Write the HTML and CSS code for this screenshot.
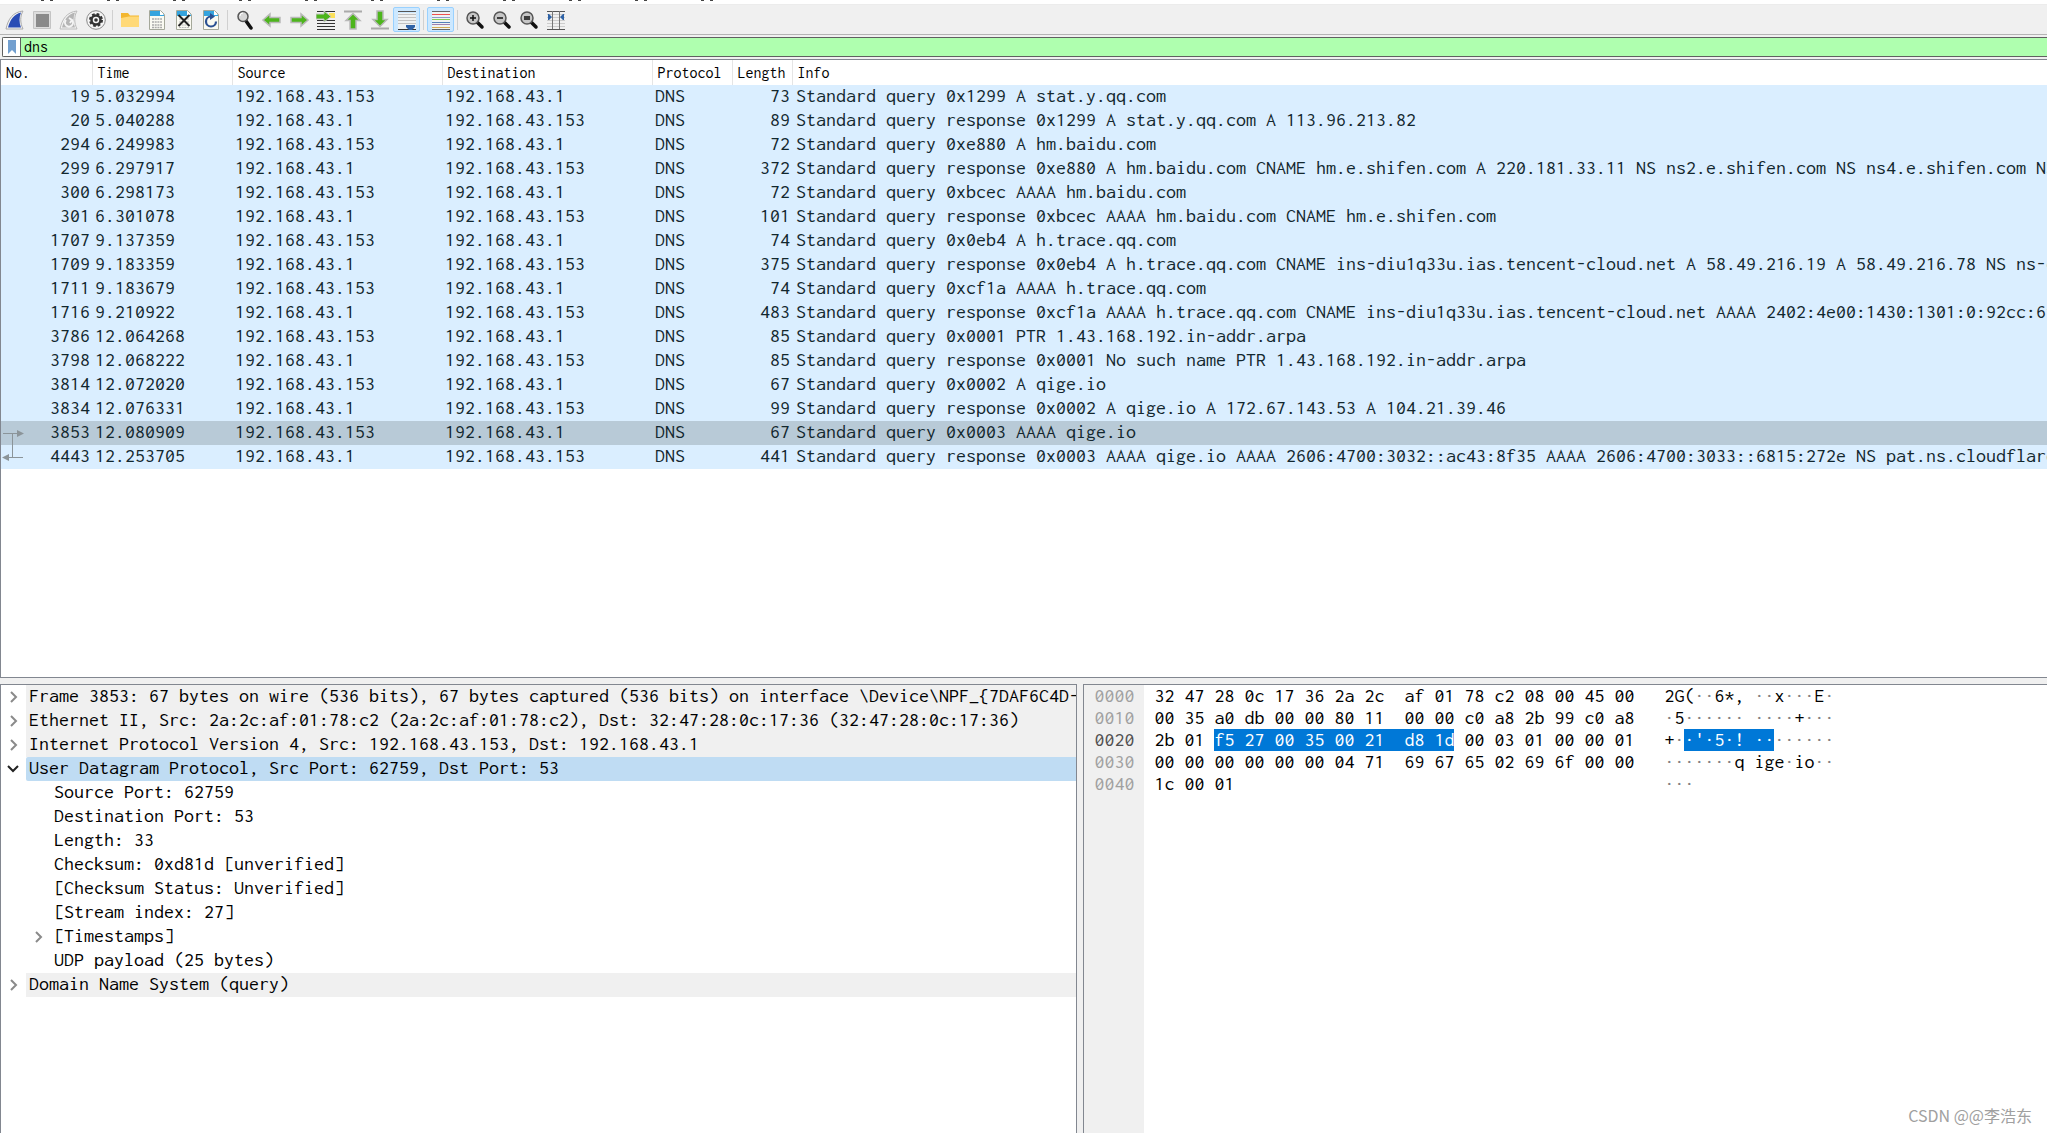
FILE: index.html
```html
<!DOCTYPE html>
<html lang="en">
<head>
<meta charset="utf-8">
<title>Packet capture</title>
<link rel="stylesheet" href="styles.css">
</head>
<body>
<div class="menubar" aria-hidden="true">
  <i></i><i></i><i></i><i></i><i></i><i></i><i></i><i></i><i></i><i></i><i></i>
</div>

<div class="toolbar" role="toolbar" aria-label="Main toolbar">
  <button aria-label="Start capture"><svg viewBox="0 0 20 20"><path d="M1 19C3 9 8 2 18 1c-3 5-3 12 0 18z" fill="#f4f4f4" stroke="#aaa"/><path d="M3 17.500C5 10 9 4 16 2.500c-2 5-2 10 0 15z" fill="#2a4cb5"/></svg></button>
  <button aria-label="Stop capture"><svg viewBox="0 0 20 20"><path d="M1.500 1.500h17v17h-17z" fill="#ddd" stroke="#c4c4c4"/><path d="M4 4h13v13H4z" fill="#8a8a8a"/></svg></button>
  <button aria-label="Restart capture"><svg viewBox="0 0 20 20"><path d="M1 19C3 9 8 2 18 1c-3 5-3 12 0 18z" fill="#f4f4f4" stroke="#bbb"/><path d="M3 17.500C5 10 9 4 16 2.500c-2 5-2 10 0 15z" fill="#b5b5b5"/><path d="M7 10a4 4 0 1 0 6 0M10 8l3 2-2 3" fill="none" stroke="#f4f4f4" stroke-width="2"/></svg></button>
  <button aria-label="Capture options"><svg viewBox="0 0 20 20"><circle cx="10" cy="10" r="9.300" fill="#f5f5f5" stroke="#888"/><circle cx="10" cy="10" r="6" fill="none" stroke="#333" stroke-width="2" stroke-dasharray="2.700 2"/><circle cx="10" cy="10" r="4.500" fill="none" stroke="#333" stroke-width="2.500"/><circle cx="10" cy="10" r="1.800" fill="#333"/></svg></button>
  <span class="sep"></span>
  <button aria-label="Open file"><svg viewBox="0 0 20 20"><path d="M1 3h7l2 2.500h9V17H1z" fill="#f3b62f"/><path d="M1 8l8-1.500h10V17H1z" fill="#ffd978"/></svg></button>
  <button aria-label="Save file"><svg viewBox="0 0 20 20"><path d="M2.500.5h11l4 4v15h-15z" fill="#fafaf2" stroke="#a5a89a"/><path d="M3 1h10v3h4v2H3z" fill="#35a4de"/><path d="M13 1v4h4z" fill="#fff"/><path d="M5 9h10M5 12h10M5 15h10M5 17.500h10" stroke="#aaa" stroke-width="1.500" stroke-dasharray="2 .700"/></svg></button>
  <button aria-label="Close file"><svg viewBox="0 0 20 20"><path d="M2.500.5h11l4 4v15h-15z" fill="#fafaf2" stroke="#a5a89a"/><path d="M3 1h10v3h4v2H3z" fill="#35a4de"/><path d="M13 1v4h4z" fill="#fff"/><path d="M5 9h10M5 12h10M5 15h10M5 17.500h10" stroke="#bbb" stroke-dasharray="2 .700"/><path d="M4.500 5l11 11M15.500 5l-11 11" stroke="#222" stroke-width="2"/></svg></button>
  <button aria-label="Reload file"><svg viewBox="0 0 20 20"><path d="M2.500.5h11l4 4v15h-15z" fill="#fafaf2" stroke="#a5a89a"/><path d="M3 1h10v3h4v2H3z" fill="#35a4de"/><path d="M13 1v4h4z" fill="#fff"/><path d="M15 11.500A5 5 0 1 1 10 6.500" fill="none" stroke="#2a5092" stroke-width="2.200"/><path d="M9 3l5 3.500-5 3.500z" fill="#2a5092"/></svg></button>
  <span class="sep"></span>
  <button aria-label="Find packet"><svg viewBox="0 0 20 20"><path d="M11 11l5 7" stroke="#111" stroke-width="3.500" stroke-linecap="round"/><circle cx="8" cy="6.500" r="5" fill="#d6d6d6" stroke="#555" stroke-width="1.500"/><path d="M5 6a3 3 0 0 1 3-3" stroke="#fff" fill="none"/></svg></button>
  <button aria-label="Previous packet"><svg viewBox="0 0 20 20"><path d="M1 10l7-6v3.500h10v5H8V16z" fill="#4db51c" stroke="#b9b9b9" stroke-width="1.500"/></svg></button>
  <button aria-label="Next packet"><svg viewBox="0 0 20 20"><path d="M19 10l-7-6v3.500H2v5h10V16z" fill="#4db51c" stroke="#b9b9b9" stroke-width="1.500"/></svg></button>
  <button aria-label="Go to packet"><svg viewBox="0 0 20 20"><path d="M1 1.500h18M1 10.500h18M1 13.500h18M1 16.500h18M1 19.500h18" stroke="#333"/><path d="M13 3h6v5h-6z" fill="#fbe05a"/><path d="M15 6.500L8 1v3H0v5h8v3z" fill="#4db51c" stroke="#c4c4c4"/></svg></button>
  <button aria-label="First packet"><svg viewBox="0 0 20 20"><path d="M1 1.500h18" stroke="#aaa" stroke-width="2"/><path d="M10 3.500l7 7h-4V19H7v-8.500H3z" fill="#4db51c" stroke="#b9b9b9" stroke-width="1.500"/></svg></button>
  <button aria-label="Last packet"><svg viewBox="0 0 20 20"><path d="M1 18.500h18" stroke="#aaa" stroke-width="2"/><path d="M10 16.500l7-7h-4V1H7v8.500H3z" fill="#4db51c" stroke="#b9b9b9" stroke-width="1.500"/></svg></button>
  <button class="on" aria-label="Auto scroll" aria-pressed="true"><svg viewBox="0 0 20 20"><path d="M1 1.500h18" stroke="#555"/><path d="M1 3h18v16H1z" fill="#eef1f2"/><path d="M1 4.500h18M1 7.500h18M1 10.500h18M1 13.500h18" stroke="#c2c2c2"/><path d="M1 19.500h18" stroke="#333"/><path d="M9 15h9v2l-3 3h-3l-3-3z" fill="#2f62a6"/></svg></button>
  <span class="sep"></span>
  <button class="on" aria-label="Colorize packets" aria-pressed="true"><svg viewBox="0 0 20 20"><path d="M1 1h18v19H1z" fill="#f0f2f2"/><path d="M1 1.500h18" stroke="#666"/><path d="M1 4.500h18" stroke="#ee5050"/><path d="M1 7.500h18" stroke="#8a9ac8"/><path d="M1 9.500h18" stroke="#85cc55"/><path d="M1 12.500h18" stroke="#5580b8"/><path d="M1 14.500h18" stroke="#a080b0"/><path d="M1 17.500h18" stroke="#d5aa55"/><path d="M1 19.500h18" stroke="#666"/></svg></button>
  <span class="sep"></span>
  <button aria-label="Zoom in"><svg viewBox="0 0 20 20"><path d="M12 12l5 5" stroke="#111" stroke-width="3.500" stroke-linecap="round"/><circle cx="8" cy="8" r="6" fill="#c6c6c6" stroke="#555" stroke-width="1.500"/><path d="M5 8h6M8 5v6" stroke="#111" stroke-width="1.500"/></svg></button>
  <button aria-label="Zoom out"><svg viewBox="0 0 20 20"><path d="M12 12l5 5" stroke="#111" stroke-width="3.500" stroke-linecap="round"/><circle cx="8" cy="8" r="6" fill="#c6c6c6" stroke="#555" stroke-width="1.500"/><path d="M5 8h6" stroke="#111" stroke-width="1.500"/></svg></button>
  <button aria-label="Normal size"><svg viewBox="0 0 20 20"><path d="M12 12l5 5" stroke="#111" stroke-width="3.500" stroke-linecap="round"/><circle cx="8" cy="8" r="6" fill="#c6c6c6" stroke="#555" stroke-width="1.500"/><path d="M5 7h6M5 9h6" stroke="#111" stroke-width="1.500"/></svg></button>
  <button aria-label="Resize columns"><svg viewBox="0 0 20 20"><path d="M1 1.500h18M1 19.500h18" stroke="#555"/><path d="M1 4.500h18M1 7.500h18M1 10.500h18M1 13.500h18M1 16.500h18" stroke="#ccc"/><path d="M6.500 1v18M13.500 1v18" stroke="#777"/><path d="M2 4h1l3 3-3 3H2zM18 4h-1l-3 3 3 3h1z" fill="#2f62a6"/></svg></button>
</div>

<form class="filter">
  <button type="button" aria-label="Filter bookmarks"><svg viewBox="0 0 10 14"><path d="M1 0h8v14l-4-4-4 4z" fill="#729fcf"/></svg></button>
  <input type="text" aria-label="Display filter" value="dns">
</form>

<main class="panes">
  <section class="packets">
    <table>
      <colgroup><col class="c-no"><col class="c-time"><col class="c-addr"><col class="c-addr"><col class="c-proto"><col class="c-len"><col></colgroup>
      <thead><tr><th>No.</th><th>Time</th><th>Source</th><th>Destination</th><th>Protocol</th><th>Length</th><th>Info</th></tr></thead>
      <tbody>
        <tr><td>19</td><td>5.032994</td><td>192.168.43.153</td><td>192.168.43.1</td><td>DNS</td><td>73</td><td>Standard query 0x1299 A stat.y.qq.com</td></tr>
        <tr><td>20</td><td>5.040288</td><td>192.168.43.1</td><td>192.168.43.153</td><td>DNS</td><td>89</td><td>Standard query response 0x1299 A stat.y.qq.com A 113.96.213.82</td></tr>
        <tr><td>294</td><td>6.249983</td><td>192.168.43.153</td><td>192.168.43.1</td><td>DNS</td><td>72</td><td>Standard query 0xe880 A hm.baidu.com</td></tr>
        <tr><td>299</td><td>6.297917</td><td>192.168.43.1</td><td>192.168.43.153</td><td>DNS</td><td>372</td><td>Standard query response 0xe880 A hm.baidu.com CNAME hm.e.shifen.com A 220.181.33.11 NS ns2.e.shifen.com NS ns4.e.shifen.com NS</td></tr>
        <tr><td>300</td><td>6.298173</td><td>192.168.43.153</td><td>192.168.43.1</td><td>DNS</td><td>72</td><td>Standard query 0xbcec AAAA hm.baidu.com</td></tr>
        <tr><td>301</td><td>6.301078</td><td>192.168.43.1</td><td>192.168.43.153</td><td>DNS</td><td>101</td><td>Standard query response 0xbcec AAAA hm.baidu.com CNAME hm.e.shifen.com</td></tr>
        <tr><td>1707</td><td>9.137359</td><td>192.168.43.153</td><td>192.168.43.1</td><td>DNS</td><td>74</td><td>Standard query 0x0eb4 A h.trace.qq.com</td></tr>
        <tr><td>1709</td><td>9.183359</td><td>192.168.43.1</td><td>192.168.43.153</td><td>DNS</td><td>375</td><td>Standard query response 0x0eb4 A h.trace.qq.com CNAME ins-diu1q33u.ias.tencent-cloud.net A 58.49.216.19 A 58.49.216.78 NS ns-c</td></tr>
        <tr><td>1711</td><td>9.183679</td><td>192.168.43.153</td><td>192.168.43.1</td><td>DNS</td><td>74</td><td>Standard query 0xcf1a AAAA h.trace.qq.com</td></tr>
        <tr><td>1716</td><td>9.210922</td><td>192.168.43.1</td><td>192.168.43.153</td><td>DNS</td><td>483</td><td>Standard query response 0xcf1a AAAA h.trace.qq.com CNAME ins-diu1q33u.ias.tencent-cloud.net AAAA 2402:4e00:1430:1301:0:92cc:6f</td></tr>
        <tr><td>3786</td><td>12.064268</td><td>192.168.43.153</td><td>192.168.43.1</td><td>DNS</td><td>85</td><td>Standard query 0x0001 PTR 1.43.168.192.in-addr.arpa</td></tr>
        <tr><td>3798</td><td>12.068222</td><td>192.168.43.1</td><td>192.168.43.153</td><td>DNS</td><td>85</td><td>Standard query response 0x0001 No such name PTR 1.43.168.192.in-addr.arpa</td></tr>
        <tr><td>3814</td><td>12.072020</td><td>192.168.43.153</td><td>192.168.43.1</td><td>DNS</td><td>67</td><td>Standard query 0x0002 A qige.io</td></tr>
        <tr><td>3834</td><td>12.076331</td><td>192.168.43.1</td><td>192.168.43.153</td><td>DNS</td><td>99</td><td>Standard query response 0x0002 A qige.io A 172.67.143.53 A 104.21.39.46</td></tr>
        <tr class="selected"><td class="linked"><svg class="link" viewBox="0 0 24 48"><path d="M2 12.500h16M11.500 12v24M7 36.500h15" fill="none" stroke="#8b9499"/><path d="M16 9l7 3.500-7 3.500zM8 33l-7 3.500L8 40z" fill="#8b9499"/></svg>3853</td><td>12.080909</td><td>192.168.43.153</td><td>192.168.43.1</td><td>DNS</td><td>67</td><td>Standard query 0x0003 AAAA qige.io</td></tr>
        <tr><td>4443</td><td>12.253705</td><td>192.168.43.1</td><td>192.168.43.153</td><td>DNS</td><td>441</td><td>Standard query response 0x0003 AAAA qige.io AAAA 2606:4700:3032::ac43:8f35 AAAA 2606:4700:3033::6815:272e NS pat.ns.cloudflare</td></tr>
      </tbody>
    </table>
  </section>

  <div class="lower">
    <section class="details">
      <ul class="tree">
        <li><div class="node top"><button aria-label="Expand"><svg viewBox="0 0 12 12"><path d="M4 1l5 5-5 5"/></svg></button><span>Frame 3853: 67 bytes on wire (536 bits), 67 bytes captured (536 bits) on interface \Device\NPF_{7DAF6C4D-</span></div></li>
        <li><div class="node top"><button aria-label="Expand"><svg viewBox="0 0 12 12"><path d="M4 1l5 5-5 5"/></svg></button><span>Ethernet II, Src: 2a:2c:af:01:78:c2 (2a:2c:af:01:78:c2), Dst: 32:47:28:0c:17:36 (32:47:28:0c:17:36)</span></div></li>
        <li><div class="node top"><button aria-label="Expand"><svg viewBox="0 0 12 12"><path d="M4 1l5 5-5 5"/></svg></button><span>Internet Protocol Version 4, Src: 192.168.43.153, Dst: 192.168.43.1</span></div></li>
        <li><div class="node top current"><button class="open" aria-label="Collapse"><svg viewBox="0 0 12 12"><path d="M1 3l5 5 5-5"/></svg></button><span>User Datagram Protocol, Src Port: 62759, Dst Port: 53</span></div>
          <ul>
            <li><div class="node leaf"><span>Source Port: 62759</span></div></li>
            <li><div class="node leaf"><span>Destination Port: 53</span></div></li>
            <li><div class="node leaf"><span>Length: 33</span></div></li>
            <li><div class="node leaf"><span>Checksum: 0xd81d [unverified]</span></div></li>
            <li><div class="node leaf"><span>[Checksum Status: Unverified]</span></div></li>
            <li><div class="node leaf"><span>[Stream index: 27]</span></div></li>
            <li><div class="node"><button aria-label="Expand"><svg viewBox="0 0 12 12"><path d="M4 1l5 5-5 5"/></svg></button><span>[Timestamps]</span></div></li>
            <li><div class="node leaf"><span>UDP payload (25 bytes)</span></div></li>
          </ul>
        </li>
        <li><div class="node top"><button aria-label="Expand"><svg viewBox="0 0 12 12"><path d="M4 1l5 5-5 5"/></svg></button><span>Domain Name System (query)</span></div></li>
      </ul>
    </section>

    <section class="bytes">
<pre class="offsets">0000
0010
<b>0020</b>
0030
0040</pre>
<pre class="hex">32 47 28 0c 17 36 2a 2c  af 01 78 c2 08 00 45 00
00 35 a0 db 00 00 80 11  00 00 c0 a8 2b 99 c0 a8
2b 01 <mark>f5 27 00 35 00 21  d8 1d</mark> 00 03 01 00 00 01
00 00 00 00 00 00 04 71  69 67 65 02 69 6f 00 00
1c 00 01</pre>
<pre class="ascii">2G(<i>··</i>6*, <i>··</i>x<i>···</i>E<i>·</i>
<i>·</i>5<i>······ ····</i>+<i>···</i>
+<i>·</i><mark>·'·5·! ··</mark><i>······</i>
<i>·······</i>q ige<i>·</i>io<i>··</i>
<i>···</i></pre>
    </section>
  </div>
</main>
<div class="watermark">CSDN @@李浩东</div>
</body>
</html>
```
FILE: styles.css
```css
* { box-sizing: border-box; }

body {
  margin: 0;
  height: 100vh;
  display: flex;
  flex-direction: column;
  overflow: hidden;
  background: #f0f0f0;
  color: #000;
  font: 20px/24px Inconsolata, Consolas, "Liberation Mono", monospace;
}

button {
  padding: 0;
  border: 0;
  background: none;
  display: flex;
  align-items: center;
  justify-content: center;
}

/* Lower edge of the menu bar */
.menubar {
  display: flex;
  gap: 54px;
  height: 5px;
  flex: none;
  padding-left: 41px;
  background: #fff;
  border-bottom: 1px solid #ececec;
}
.menubar i {
  width: 12px;
  height: 1px;
  border: 0 solid #444;
  border-width: 0 3px;
}

.toolbar {
  display: flex;
  align-items: center;
  flex: none;
  height: 30px;
  padding: 0 1px;
  border-bottom: 1px solid #b4b4b4;
}
.toolbar button { width: 27px; height: 25px; }
.toolbar svg { width: 20px; height: 20px; }
.toolbar .on {
  background: #cce8ff;
  border: 1px solid #99d1ff;
  border-radius: 2px;
}
.sep { width: 7px; height: 20px; display: flex; justify-content: center; }
.sep::before { content: ""; width: 1px; background: #d0d0d0; }

.filter {
  display: flex;
  flex: none;
  height: 20px;
  margin: 2px 0 2px 2px;
  border: 1px solid #606060;
  border-right: 0;
  border-radius: 2px 0 0 2px;
  background: #afffaf;
}
.filter button { width: 18px; background: #fff; border-right: 1px solid #606060; }
.filter svg { width: 10px; height: 14px; }
.filter input {
  flex: 1;
  min-width: 0;
  border: 0;
  padding: 0 3px;
  background: none;
  color: #000;
  font: 16px/18px Inconsolata, Consolas, "Liberation Mono", monospace;
}

.panes { flex: 1; min-height: 0; display: flex; flex-direction: column; gap: 6px; }
.packets, .details, .bytes { background: #fff; border: 1px solid #828790; overflow: hidden; }
.packets { flex: 618 1 0; border-right: 0; }
.lower { flex: 450 1 0; min-height: 0; display: flex; gap: 6px; }
.details { flex: 1077 1 0; min-width: 0; border-bottom: 0; }
.bytes { flex: 964 1 0; min-width: 0; border-width: 1px 0 0 1px; display: flex; }

table { width: 100%; table-layout: fixed; border-collapse: collapse; }
.c-no { width: 91px; }
.c-time { width: 140px; }
.c-addr { width: 210px; }
.c-proto { width: 80px; }
.c-len { width: 60px; }
th {
  height: 25px;
  padding: 0 5px;
  border-right: 1px solid #e5e5e5;
  text-align: left;
  font-size: 16px;
  font-weight: 400;
  line-height: 24px;
}
th:last-child { border-right: 0; }
td {
  height: 24px;
  padding: 0 3px 2px;
  line-height: 22px;
  white-space: nowrap;
  overflow: hidden;
  background: #daeeff;
  color: #12272e;
}
td:first-child, td:nth-child(6) { text-align: right; }
td:first-child, td:nth-child(6) { padding-right: 2px; }
td:last-child { padding-left: 4px; }
.selected td { background: #b8cad7; }
td.linked { position: relative; overflow: visible; }
.link { position: absolute; left: 0; top: 0; width: 24px; height: 48px; }

ul { margin: 0; padding: 0; list-style: none; }
.tree ul { padding-left: 25px; }
.node { display: flex; height: 24px; white-space: nowrap; }
.node button { width: 25px; flex: none; padding-right: 2px; }
.node svg { width: 12px; height: 12px; fill: none; stroke: #8a8a8a; stroke-width: 2; }
.node .open svg { stroke: #222; }
.node span { flex: 1; min-width: 0; padding: 0 0 2px 3px; line-height: 22px; overflow: hidden; }
.top span { background: #f0f0f0; }
.current span { background: #bfdcf3; border-radius: 2px 0 0 2px; }
.leaf { padding-left: 25px; }

pre { margin: 0; font: inherit; line-height: 22px; }
.offsets { padding: 0 10px; background: #f0f0f0; color: #a0a0a0; }
.offsets b { font-weight: 400; color: #505050; }
.hex { width: 520px; padding-left: 10px; }
.ascii i { font-style: normal; color: #808080; }
mark { padding-bottom: 1px; background: #0078d7; color: #fff; }

.watermark {
  position: absolute;
  right: 15px;
  bottom: 6px;
  color: #a0a0a0;
  font: 16px/24px "Noto Sans CJK SC", sans-serif;
}
```
